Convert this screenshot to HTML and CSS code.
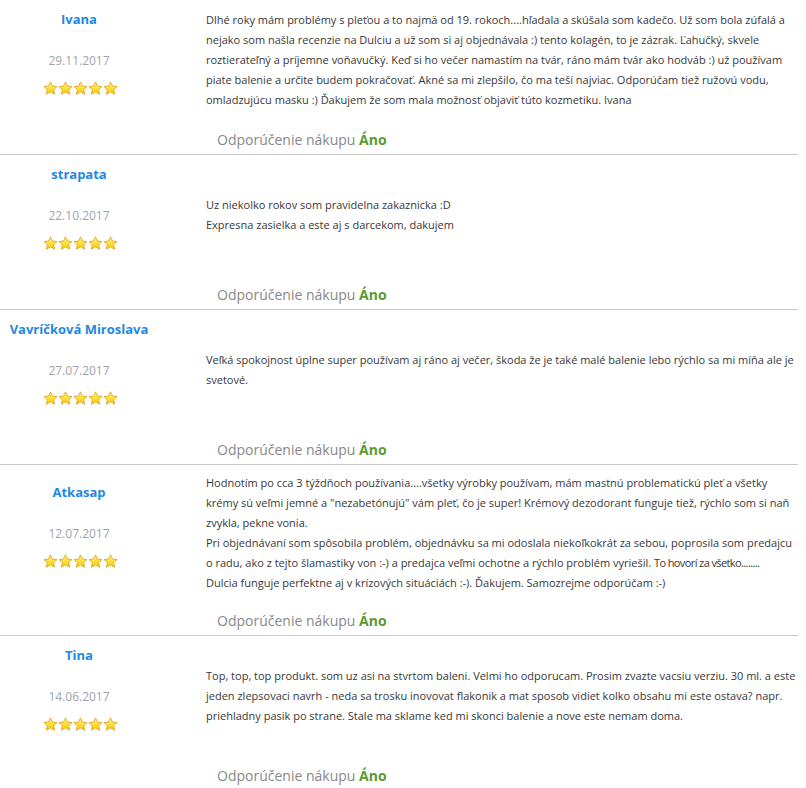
FILE: index.html
```html
<!DOCTYPE html>
<html lang="sk">
<head>
  <meta charset="UTF-8">
  <title>Recenzie</title>
  <link rel="stylesheet" href="styles.css">
</head>
<body>
  <svg width="0" height="0" class="defs">
    <defs>
      <linearGradient id="starFill" x1="0" y1="0" x2="0" y2="1">
        <stop offset="0" stop-color="#fff6a0"/>
        <stop offset="0.5" stop-color="#ffe23a"/>
        <stop offset="1" stop-color="#f7c600"/>
      </linearGradient>
      <symbol id="star" viewBox="0 0 16 16">
        <path d="M8 0.9 L10.1 5.4 L15 5.9 L11.3 9.2 L12.4 14.1 L8 11.5 L3.6 14.1 L4.7 9.2 L1 5.9 L5.9 5.4 Z" fill="url(#starFill)" stroke="#e3a72a" stroke-width="1" stroke-linejoin="round"/>
      </symbol>
    </defs>
  </svg>

  <div class="reviews">

    <div class="review">
      <div class="review-row">
        <div class="review-author">
          <div class="name">Ivana</div>
          <div class="date">29.11.2017</div>
          <div class="stars">
            <svg><use href="#star"/></svg><svg><use href="#star"/></svg><svg><use href="#star"/></svg><svg><use href="#star"/></svg><svg><use href="#star"/></svg>
          </div>
        </div>
        <div class="review-text">
          Dlhé roky mám problémy s pleťou a to najmä od 19. rokoch....hľadala a skúšala som kadečo. Už som bola zúfalá a nejako som našla recenzie na Dulciu a už som si aj objednávala :) tento kolagén, to je zázrak. Ľahučký, skvele roztierateľný a príjemne voňavučký. Keď si ho večer namastím na tvár, ráno mám tvár ako hodváb :) už používam piate balenie a určite budem pokračovať. Akné sa mi zlepšilo, čo ma teší najviac. Odporúčam tiež ružovú vodu, omladzujúcu masku :) Ďakujem že som mala možnosť objaviť túto kozmetiku. Ivana
        </div>
      </div>
      <div class="recommend">Odporúčenie nákupu <b>Áno</b></div>
    </div>

    <div class="review">
      <div class="review-row">
        <div class="review-author">
          <div class="name">strapata</div>
          <div class="date">22.10.2017</div>
          <div class="stars">
            <svg><use href="#star"/></svg><svg><use href="#star"/></svg><svg><use href="#star"/></svg><svg><use href="#star"/></svg><svg><use href="#star"/></svg>
          </div>
        </div>
        <div class="review-text">
          Uz niekolko rokov som pravidelna zakaznicka :D<br>
          Expresna zasielka a este aj s darcekom, dakujem
        </div>
      </div>
      <div class="recommend">Odporúčenie nákupu <b>Áno</b></div>
    </div>

    <div class="review">
      <div class="review-row">
        <div class="review-author">
          <div class="name">Vavríčková Miroslava</div>
          <div class="date">27.07.2017</div>
          <div class="stars">
            <svg><use href="#star"/></svg><svg><use href="#star"/></svg><svg><use href="#star"/></svg><svg><use href="#star"/></svg><svg><use href="#star"/></svg>
          </div>
        </div>
        <div class="review-text">
          <span class="nowrap">Veľká spokojnost úplne super používam aj ráno aj večer, škoda že je také malé balenie lebo rýchlo sa mi míňa ale je</span>
          svetové.
        </div>
      </div>
      <div class="recommend">Odporúčenie nákupu <b>Áno</b></div>
    </div>

    <div class="review">
      <div class="review-row">
        <div class="review-author">
          <div class="name">Atkasap</div>
          <div class="date">12.07.2017</div>
          <div class="stars">
            <svg><use href="#star"/></svg><svg><use href="#star"/></svg><svg><use href="#star"/></svg><svg><use href="#star"/></svg><svg><use href="#star"/></svg>
          </div>
        </div>
        <div class="review-text">
          Hodnotím po cca 3 týždňoch používania....všetky výrobky používam, mám mastnú problematickú pleť a všetky<br>
          krémy sú veľmi jemné a "nezabetónujú" vám pleť, čo je super! Krémový dezodorant funguje tiež, rýchlo som si naň<br>
          zvykla, pekne vonia.<br>
          Pri objednávaní som spôsobila problém, objednávku sa mi odoslala niekoľkokrát za sebou, poprosila som predajcu<br>
          o radu, ako z tejto šlamastiky von :-) a predajca veľmi ochotne a rýchlo problém vyriešil. <span class="tight">To hovorí za všetko........</span><br>
          Dulcia funguje perfektne aj v krízových situáciách :-). Ďakujem. Samozrejme odporúčam :-)
        </div>
      </div>
      <div class="recommend">Odporúčenie nákupu <b>Áno</b></div>
    </div>

    <div class="review">
      <div class="review-row">
        <div class="review-author">
          <div class="name">Tina</div>
          <div class="date">14.06.2017</div>
          <div class="stars">
            <svg><use href="#star"/></svg><svg><use href="#star"/></svg><svg><use href="#star"/></svg><svg><use href="#star"/></svg><svg><use href="#star"/></svg>
          </div>
        </div>
        <div class="review-text">
          Top, top, top produkt. som uz asi na stvrtom baleni. Velmi ho odporucam. Prosim zvazte vacsiu verziu. 30 ml. a este jeden zlepsovaci navrh - neda sa trosku inovovat flakonik a mat sposob vidiet kolko obsahu mi este ostava? napr. priehladny pasik po strane. Stale ma sklame ked mi skonci balenie a nove este nemam doma.
        </div>
      </div>
      <div class="recommend">Odporúčenie nákupu <b>Áno</b></div>
    </div>

  </div>
</body>
</html>
```

FILE: styles.css
```css
body {
  margin: 0;
  background: #fff;
  font-family: 'Open Sans', sans-serif;
  color: #383838;
}

.defs {
  position: absolute;
  width: 0;
  height: 0;
}

.reviews {
  width: 798px;
}

.review {
  padding-top: 8px;
  border-bottom: 1px solid #c8c8c8;
}

.review-row {
  display: flex;
  align-items: center;
}

.review-author {
  width: 158px;
  flex-shrink: 0;
  text-align: center;
  height: 104px;
}

.name {
  color: #1e88e5;
  font-weight: bold;
  font-size: 13px;
  line-height: 22px;
}

.date {
  color: #9ea4ae;
  font-size: 12px;
  line-height: 20px;
  margin-top: 21px;
}

.stars {
  display: flex;
  justify-content: center;
  margin-top: 10px;
  padding-left: 2px;
}

.stars svg {
  width: 15px;
  height: 15px;
}

.review-text {
  flex: 1;
  margin-left: 48px;
  margin-right: -8px;
  font-size: 11px;
  line-height: 20px;
}

/* keep the wrapping as in the original, Open Sans runs a little wider here */
.tight {
  letter-spacing: -0.6px;
}

.nowrap {
  white-space: nowrap;
}

.recommend {
  padding: 17px 0 4px 217px;
  font-size: 14px;
  line-height: 21px;
  color: #888;
}

.recommend b {
  color: #5b9a2f;
}
```
